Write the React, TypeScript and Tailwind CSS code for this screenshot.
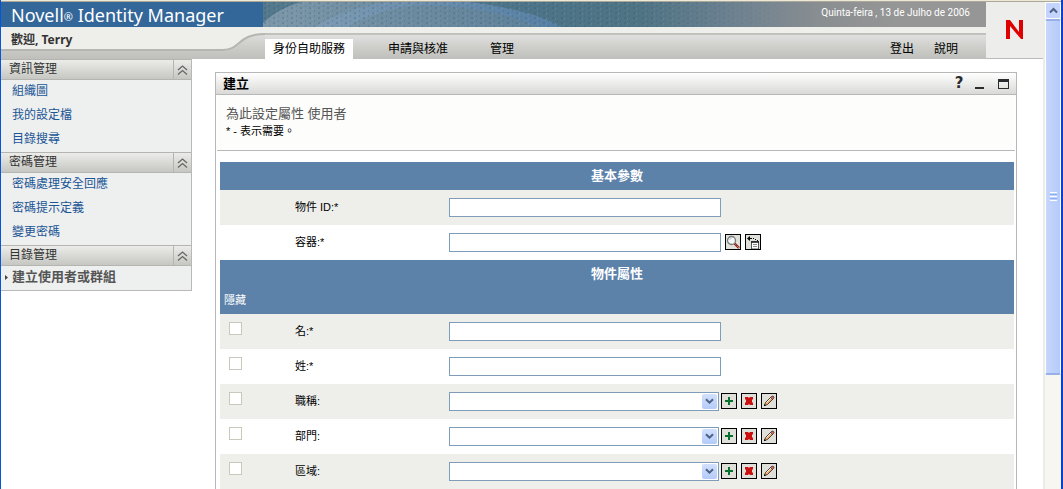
import React from "react";

const SANS = "font-['Liberation_Sans','Noto_Sans_CJK_TC',sans-serif]";
const HUMANIST = "font-['Noto_Sans','Noto_Sans_CJK_TC',sans-serif]";

type MenuSection = { title: string; items: string[]; current?: boolean };

const sections: MenuSection[] = [
  { title: "資訊管理", items: ["組織圖", "我的設定檔", "目錄搜尋"] },
  { title: "密碼管理", items: ["密碼處理安全回應", "密碼提示定義", "變更密碼"] },
  { title: "目錄管理", items: ["建立使用者或群組"], current: true },
];

function Banner() {
  return (
    <div className="flex h-[25px] bg-[#336699]">
      <h1 className={`flex w-[262px] items-center pl-[10px] text-[18px] leading-none whitespace-nowrap text-white ${HUMANIST}`}>
        Novell<span className="pt-[3px] text-[11px]">®</span>&nbsp;Identity Manager
      </h1>
      <div className="relative flex-1">
        <svg className="absolute inset-0 h-full w-full" viewBox="0 0 723 25" preserveAspectRatio="none" aria-hidden="true">
          <defs>
            <linearGradient id="sky">
              <stop offset="0" stopColor="#54788c" />
              <stop offset="0.38" stopColor="#4d7488" />
              <stop offset="0.52" stopColor="#4f7484" />
              <stop offset="0.64" stopColor="#6b8090" />
              <stop offset="0.78" stopColor="#8b8f91" />
              <stop offset="0.88" stopColor="#969696" />
            </linearGradient>
            <linearGradient id="fade">
              <stop offset="0.5" stopColor="#fff" />
              <stop offset="0.75" stopColor="#000" />
            </linearGradient>
            <linearGradient id="hill">
              <stop offset="0" stopColor="#7c97a8" />
              <stop offset="1" stopColor="#5c7f98" />
            </linearGradient>
            <linearGradient id="crest">
              <stop offset="0" stopColor="#7d9ab2" />
              <stop offset="1" stopColor="#557fa4" />
            </linearGradient>
            <pattern id="weave" width="9" height="5" patternUnits="userSpaceOnUse">
              <path d="M1 0h2v2H1zM6 3h1v2H6z" fill="#2d5469" opacity=".22" />
              <path d="M4 1h1v2H4z" fill="#a8bcc8" opacity=".18" />
            </pattern>
            <mask id="weaveMask">
              <rect width="723" height="25" fill="url(#fade)" />
            </mask>
          </defs>
          <rect width="723" height="25" fill="url(#sky)" />
          <path d="M0 21Q14 7 38 0H205Q270 8 298 25H0z" fill="url(#hill)" />
          <path d="M52 25Q80 7 125 0H205Q270 8 298 25H275Q225 3 155 3Q112 8 85 25z" fill="url(#crest)" />
          <rect width="723" height="25" fill="url(#weave)" mask="url(#weaveMask)" />
        </svg>
        <p className="relative pt-[4px] pr-[16px] text-right text-[10px] leading-[14px] text-white font-['Roboto',sans-serif]">
          Quinta-feira , 13 de Julho de 2006
        </p>
      </div>
    </div>
  );
}

function NavBar() {
  return (
    <div className="flex h-[32px] items-stretch">
      <div className="relative w-[264px]">
        <svg className="absolute inset-0 h-full w-full" viewBox="0 0 264 32" aria-hidden="true">
          <defs>
            <linearGradient id="bar" x2="0" y2="1">
              <stop offset="0.2" stopColor="#dededc" />
              <stop offset="0.65" stopColor="#cbccc8" />
              <stop offset="1" stopColor="#bfc0bb" />
            </linearGradient>
          </defs>
          <rect width="264" height="32" fill="url(#bar)" />
          <path d="M0 0H264V7C236 7 240 23 222 23H0z" fill="#eeeeea" />
          <path d="M0 23H222C240 23 236 7 264 7" fill="none" stroke="#b5b6b2" strokeWidth="2" />
        </svg>
        <p className={`relative pt-[5px] pl-[10px] text-[12px] leading-[16px] font-bold text-[#333] ${HUMANIST}`}>歡迎, Terry</p>
      </div>
      <div className="flex flex-1 border-t-[6px] border-[#eeeeea]">
        <nav className={`flex flex-1 items-stretch border-t-2 border-[#c0c1bd] bg-linear-to-b from-[#e0e0de] via-[#cecfcb] to-[#bfc0bb] text-[12px] text-black ${SANS}`}>
          <a href="#self" className="mt-[4px] flex w-[88px] items-center justify-center bg-white">身份自助服務</a>
          <a href="#requests" className="ml-[35px] flex items-center pt-[3px]">申請與核准</a>
          <a href="#admin" className="ml-[42px] flex items-center pt-[3px]">管理</a>
          <a href="#logout" className="ml-auto flex items-center pt-[3px]">登出</a>
          <a href="#help" className="mr-[28px] ml-[20px] flex items-center pt-[3px]">說明</a>
        </nav>
      </div>
    </div>
  );
}

function Header() {
  return (
    <header className="flex">
      <div className="flex-1">
        <Banner />
        <NavBar />
      </div>
      <div className="flex w-[57px] items-center justify-center border-b border-[#bbb] bg-[#ededeb]">
        <svg className="mb-px h-[19px] w-[17px]" viewBox="0 0 17 19" role="img" aria-label="Novell">
          <path d="M0 0H4L13 12V0H17V19H15L4 6V19H0z" fill="#e00000" />
        </svg>
      </div>
    </header>
  );
}

function Sidebar() {
  return (
    <aside className={`w-[191px] shrink-0 self-start border-r border-b border-[#b8b8b4] bg-[#eeefef] text-[12px] ${SANS}`}>
      {sections.map((s) => (
        <section key={s.title}>
          <h2 className="flex h-[21px] items-stretch border-y border-[#b4b5b0] bg-linear-to-b from-[#ececea] to-[#c6c7c2] text-[#333]">
            <span className="flex flex-1 items-center pb-[2px] pl-[8px]">{s.title}</span>
            <button type="button" aria-label={`收合 ${s.title}`} className="flex w-[18px] items-center justify-center border-l border-[#b4b5b0]">
              <svg width="11" height="10" viewBox="0 0 11 10" fill="none" stroke="#666" strokeWidth="1.3" aria-hidden="true">
                <path d="M1 5L5.5 1L10 5M1 9.5L5.5 5.5L10 9.5" />
              </svg>
            </button>
          </h2>
          <ul>
            {s.items.map((item) => (
              <li key={item} className="flex h-[24px] items-center pb-[2px]">
                <span className="flex w-[11px] justify-center">
                  {s.current && (
                    <svg width="3" height="5" viewBox="0 0 3 5" aria-hidden="true">
                      <path d="M0 0L3 2.5L0 5z" fill="#444" />
                    </svg>
                  )}
                </span>
                <a href="#item" className={s.current ? "text-[13px] font-bold text-[#555]" : "text-[#1a5595]"}>{item}</a>
              </li>
            ))}
          </ul>
        </section>
      ))}
    </aside>
  );
}

function IconButton({ label, children }: { label: string; children: React.ReactNode }) {
  return (
    <button type="button" aria-label={label} className="flex h-[16px] w-[16px] items-center justify-center border border-black bg-[#dfe0da]">
      <svg width="14" height="14" viewBox="0 0 14 14" aria-hidden="true">{children}</svg>
    </button>
  );
}

function LookupButtons() {
  return (
    <div className="ml-[4px] flex gap-[4px] pb-px">
      <IconButton label="查詢">
        <path d="M8.5 8.5L13 13" stroke="#8b1a1a" strokeWidth="2.4" />
        <path d="M9.5 9.5L13 13" stroke="#f0b070" strokeWidth="1" strokeDasharray="1 1" />
        <circle cx="5.5" cy="5.5" r="4" fill="#f6f8f8" stroke="#777b7b" strokeWidth="1.3" />
        <path d="M3.5 5Q4 3.5 5.5 3.5" fill="none" stroke="#b9c2c2" />
      </IconButton>
      <IconButton label="歷程">
        <path d="M1 3.5L4 1V3H6V4H4V6z" fill="#000" />
        <path d="M7 3h1v1H7zM9 4h1v1H9zM11 5h1v1h-1z" fill="#000" />
        <path d="M5.5 6.5H12.5V14H5.5z" fill="#fff" stroke="#555" />
        <path d="M5 7H13" stroke="#222" strokeWidth="1.6" />
        <path d="M7 9.5H11M7 11.5H11" stroke="#888" />
      </IconButton>
    </div>
  );
}

function EditButtons() {
  return (
    <div className="ml-[2px] flex gap-[4px] pb-px">
      <IconButton label="新增">
        <path d="M6 3H8V6H11V8H8V11H6V8H3V6H6z" fill="#0a7030" />
      </IconButton>
      <IconButton label="刪除">
        <path d="M3 3H6L7 4L8 3H11V5L10 6V8L11 9V11H8L7 10L6 11H3V9L4 8V6L3 5z" fill="#cc1010" />
      </IconButton>
      <IconButton label="編輯">
        <path d="M2.5 11.5L3.5 8.5L9 3L11 5L5.5 10.5z" fill="#f0a860" stroke="#222" strokeWidth=".8" />
        <path d="M8.5 3.5L10 2H11L12 3V4L10.5 5.5z" fill="#d06868" stroke="#222" strokeWidth=".6" />
        <path d="M4.5 8.5L9 4" stroke="#fff" />
        <path d="M2 12V10L4 12z" fill="#000" />
      </IconButton>
    </div>
  );
}

type Field = { id: string; label: string; kind: "text" | "lookup" | "select"; hide?: boolean };

const basic: Field[] = [
  { id: "oid", label: "物件 ID:*", kind: "text" },
  { id: "container", label: "容器:*", kind: "lookup" },
];

const attributes: Field[] = [
  { id: "first", label: "名:*", kind: "text", hide: true },
  { id: "last", label: "姓:*", kind: "text", hide: true },
  { id: "title", label: "職稱:", kind: "select", hide: true },
  { id: "dept", label: "部門:", kind: "select", hide: true },
  { id: "region", label: "區域:", kind: "select", hide: true },
];

function FieldRow({ field }: { field: Field }) {
  return (
    <div className="flex h-[35px] items-center odd:bg-[#eeeeeb]">
      <div className="w-[75px] pb-[6px] pl-[9px]">
        {field.hide && (
          <input type="checkbox" aria-label={`隱藏 ${field.label}`} className="block h-[13px] w-[13px] appearance-none border border-[#cac8bb] bg-white checked:bg-[#5b82aa]" />
        )}
      </div>
      <label htmlFor={field.id} className="w-[154px] text-[11px] text-black">{field.label}</label>
      {field.kind === "select" ? (
        <div className="relative">
          <select id={field.id} className="block h-[19px] w-[270px] appearance-none border border-[#7f9db9] bg-white pl-1 text-[11px]">
            <option />
          </select>
          <span className="pointer-events-none absolute top-[2px] right-[2px] flex h-[15px] w-[15px] items-center justify-center rounded-[2px] bg-linear-to-b from-[#d2e0fc] to-[#b4cbfa]">
            <svg width="9" height="7" viewBox="0 0 9 7" fill="none" stroke="#4d6185" strokeWidth="2" aria-hidden="true">
              <path d="M1 1.2L4.5 4.7L8 1.2" />
            </svg>
          </span>
        </div>
      ) : (
        <input id={field.id} type="text" className="h-[19px] w-[272px] border border-[#7f9db9] bg-white px-1 text-[11px]" />
      )}
      {field.kind === "lookup" && <LookupButtons />}
      {field.kind === "select" && <EditButtons />}
    </div>
  );
}

function Portlet() {
  return (
    <section className={`min-h-full border border-[#b8b8b8] bg-white ${SANS}`}>
      <header className="flex h-[22px] items-center border-b border-[#b8b8b8] bg-linear-to-b from-white to-[#d9dad7] px-[7px]">
        <h2 className="flex-1 text-[13px] font-bold text-black">建立</h2>
        <button type="button" aria-label="說明" className="w-[12px] text-[15px] leading-none font-bold text-[#2a2d2f] font-['DejaVu_Sans',sans-serif]">?</button>
        <button type="button" aria-label="最小化" className="ml-[10px] flex h-[11px] w-[9px] items-end">
          <span className="h-[2px] w-full bg-[#2a2d2f]" />
        </button>
        <button type="button" aria-label="最大化" className="ml-[14px] h-[10px] w-[11px] border border-t-[3px] border-[#2a2d2f]" />
      </header>
      <div className="mx-px h-[56px] border-b border-[#b8b8b8] bg-[#fdfdfb] pt-[10px] pl-[9px]">
        <p className="text-[13px] leading-[18px] text-[#555]">為此設定屬性 使用者</p>
        <p className="text-[11px] leading-[16px] text-black">* - 表示需要。</p>
      </div>
      <form className="mt-[11px] mr-[2px] ml-[4px]">
        <h3 className="flex h-[28px] items-center justify-center bg-[#5c82aa] text-[13px] font-bold text-white">基本參數</h3>
        <div>{basic.map((f) => <FieldRow key={f.id} field={f} />)}</div>
        <div className="h-[54px] bg-[#5c82aa] text-white">
          <h3 className="flex h-[28px] items-center justify-center text-[13px] font-bold">物件屬性</h3>
          <p className="pt-[4px] pl-[4px] text-[11px] leading-[16px]">隱藏</p>
        </div>
        <div>{attributes.map((f) => <FieldRow key={f.id} field={f} />)}</div>
      </form>
    </section>
  );
}

function ScrollTrack() {
  return (
    <div aria-hidden="true" className="flex w-[18px] shrink-0 flex-col border-l-2 border-[#edede8] bg-[#f7f6f3]">
      <div className="flex h-[17px] items-center justify-center rounded-[2px] border border-white bg-[#c4d4fc]">
        <svg width="9" height="7" viewBox="0 0 9 7" fill="none" stroke="#4d6185" strokeWidth="2">
          <path d="M1 5.5L4.5 2L8 5.5" />
        </svg>
      </div>
      <div className="flex h-[73%] flex-col items-center justify-center rounded-[2px] border-x border-y-2 border-x-white border-y-[#98b0e8] bg-linear-to-r from-[#c8d6fb] to-[#b4cbfa]">
        <div className="flex w-[7px] flex-col gap-px">
          <span className="h-px bg-white" />
          <span className="h-px bg-[#8cb0f8]" />
          <span className="h-px bg-white" />
          <span className="h-px bg-[#8cb0f8]" />
          <span className="h-px bg-white" />
        </div>
      </div>
    </div>
  );
}

export default function App() {
  return (
    <div className="flex h-screen flex-col overflow-hidden border-r-2 border-l border-r-[#0542d8] border-l-[#0855dd] bg-white">
      <div className="h-[2px] shrink-0 border-b border-[#aca899] bg-[#ece9d8]" />
      <div className="flex min-h-0 flex-1">
        <div className="flex min-w-0 flex-1 flex-col">
          <Header />
          <div className="flex min-h-0 flex-1">
            <Sidebar />
            <main className="min-w-0 flex-1 pt-[13px] pr-[26px] pl-[23px]">
              <Portlet />
            </main>
          </div>
        </div>
        <ScrollTrack />
      </div>
    </div>
  );
}
